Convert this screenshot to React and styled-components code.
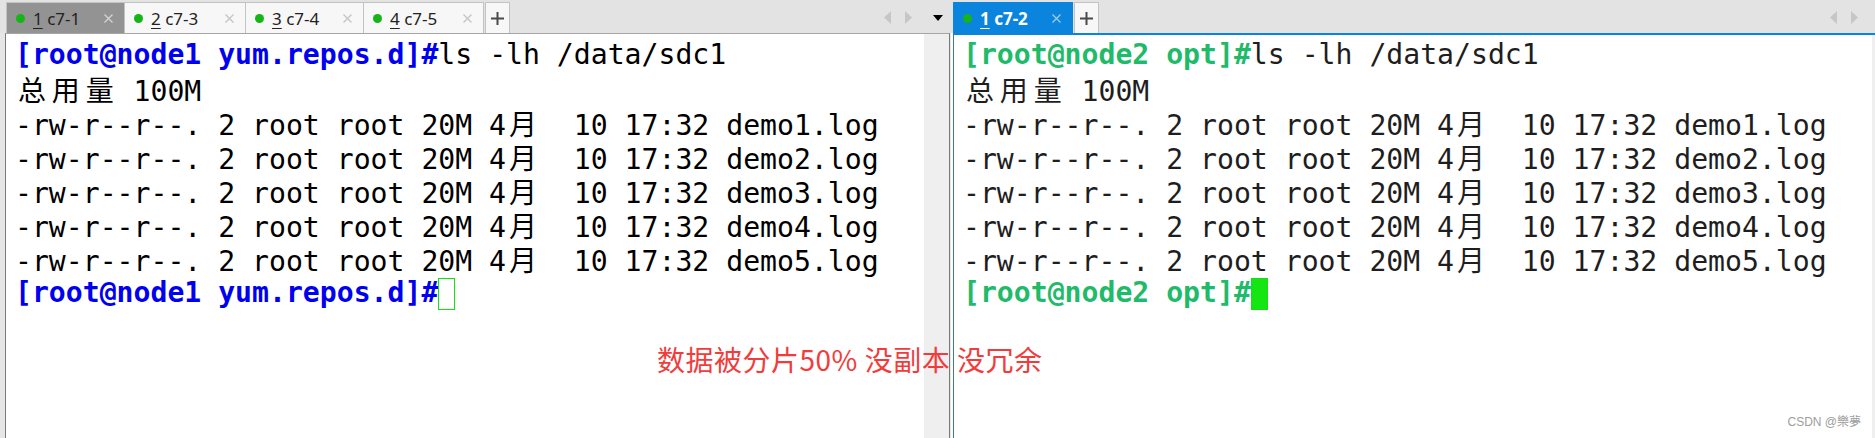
import React from "react";
import styled, { createGlobalStyle } from "styled-components";

const FONT = 28.14;
const CELL = FONT * 0.60205; // DejaVu Sans Mono advance

const GlobalStyle = createGlobalStyle`
	html, body {
		margin: 0;
		padding: 0;
		background: #fff;
	}
	body {
		width: 1875px;
		height: 438px;
		overflow: hidden;
	}
`;

const Screen = styled.div`
	position: relative;
	display: flex;
	width: 1875px;
	height: 438px;
	background: #fff;
	overflow: hidden;
`;

const Pane = styled.section`
	display: flex;
	flex-direction: column;
	flex: ${(p) => (p.$width ? `0 0 ${p.$width}px` : "1 1 auto")};
	min-width: 0;
	background: ${(p) => (p.$focused ? "#fff" : "#e6e6e6")};
`;

const TabBar = styled.div`
	display: flex;
	align-items: flex-end;
	height: 33px;
	padding-left: ${(p) => p.$inset}px;
	padding-right: ${(p) => p.$trail}px;
	box-sizing: border-box;
	background: #e3e3e3;
	font-family: "Noto Sans", "Open Sans", sans-serif;
	font-size: 17px;
`;

const Tab = styled.div`
	display: flex;
	align-items: center;
	width: ${(p) => p.$w}px;
	height: 31px;
	box-sizing: border-box;
	padding: 0 11px 0 9px;
	margin-right: -1px;
	border: 1px solid ${(p) => (p.$variant === "active" ? "#0b84dd" : "#c3c3c3")};
	border-bottom: none;
	background: ${(p) =>
		p.$variant === "active" ? "#0b84dd" : p.$variant === "dim" ? "#939393" : "#f7f7f7"};
	color: ${(p) => (p.$variant === "active" ? "#fff" : "#222")};
	font-weight: ${(p) => (p.$variant === "active" ? 700 : 400)};
`;

const Dot = styled.span`
	flex: none;
	width: 9px;
	height: 9px;
	border-radius: 50%;
	background: #17b417;
	margin-right: 8px;
`;

const Label = styled.span`
	white-space: pre;
	line-height: 1;
	u {
		text-underline-offset: 3px;
	}
`;

const Close = styled.svg`
	flex: none;
	margin-left: auto;
	width: 9px;
	height: 9px;
`;

const PlusButton = styled.div`
	display: flex;
	align-items: center;
	justify-content: center;
	width: 25px;
	height: 31px;
	margin-left: 2px;
	box-sizing: border-box;
	border: 1px solid #c3c3c3;
	border-bottom: none;
	background: #f7f7f7;
`;

const Controls = styled.div`
	display: flex;
	align-items: center;
	align-self: stretch;
	padding-top: 2px;
	margin-left: auto;
	gap: 14px;
`;

const Body = styled.div`
	flex: 1;
	display: flex;
	margin-left: ${(p) => p.$ml}px;
	margin-right: ${(p) => p.$mr}px;
	background: #fff;
	border-top: ${(p) => (p.$focused ? "2px solid #0b84dd" : "1px solid #a6a6a6")};
	border-left: 1px solid ${(p) => (p.$focused ? "#3a78b8" : "#7a7a7a")};
	border-right: ${(p) => (p.$focused ? "none" : "1px solid #7a7a7a")};
`;

const Term = styled.div`
	flex: 1;
	padding: ${(p) => (p.$focused ? 3 : 4)}px 0 0 9px;
	font-family: "DejaVu Sans Mono", "Liberation Mono", monospace;
	font-size: ${FONT}px;
	line-height: 34px;
	color: ${(p) => p.$color};
	white-space: pre;
`;

const Line = styled.div`
	height: 34px;
`;

const Prompt = styled.span`
	font-weight: 700;
	color: ${(p) => p.$color};
`;

const Wide = styled.span`
	display: inline-block;
	width: ${CELL * 2}px;
	text-align: center;
	font-family: "Noto Sans CJK SC", sans-serif;
	font-size: 28px;
	font-weight: 400;
`;

const Cursor = styled.span`
	display: inline-block;
	vertical-align: top;
	width: ${CELL}px;
	height: 32px;
	margin-top: 2px;
	box-sizing: border-box;
	border: 1px solid #14e014;
	background: ${(p) => (p.$filled ? "#14e614" : "transparent")};
`;

const Scrollbar = styled.div`
	flex: none;
	width: ${(p) => p.$w}px;
	background: #efefef;
`;

const Note = styled.div`
	position: absolute;
	left: 657px;
	top: 345px;
	font-family: "Noto Sans CJK SC", sans-serif;
	font-size: 28px;
	line-height: 28px;
	letter-spacing: 0.5px;
	color: #f23c3c;
	white-space: pre;
`;

const Watermark = styled.div`
	position: absolute;
	right: 14px;
	top: 414px;
	font-family: "Liberation Sans", "Noto Sans CJK TC", sans-serif;
	font-size: 12px;
	line-height: 16px;
	color: #9d9d9d;
`;

const CJK = /([\u3400-\u9fff])/;

function Cells({ text }) {
	return text
		.split(CJK)
		.map((part, i) => (CJK.test(part) ? <Wide key={i}>{part}</Wide> : part));
}

const files = [1, 2, 3, 4, 5].map(
	(n) => `-rw-r--r--. 2 root root 20M 4月  10 17:32 demo${n}.log`
);

function Terminal({ host, dir, promptColor, textColor, focused }) {
	const prompt = `[root@${host} ${dir}]#`;
	return (
		<Term $color={textColor} $focused={focused}>
			<Line>
				<Prompt $color={promptColor}>{prompt}</Prompt>ls -lh /data/sdc1
			</Line>
			<Line>
				<Cells text="总用量 100M" />
			</Line>
			{files.map((f) => (
				<Line key={f}>
					<Cells text={f} />
				</Line>
			))}
			<Line>
				<Prompt $color={promptColor}>{prompt}</Prompt>
				<Cursor $filled={focused} />
			</Line>
		</Term>
	);
}

function CloseIcon({ color }) {
	return (
		<Close viewBox="0 0 9 9">
			<path d="M0.5 0.5 L8.5 8.5 M8.5 0.5 L0.5 8.5" stroke={color} strokeWidth="1.3" />
		</Close>
	);
}

function Arrow({ dir }) {
	return (
		<svg width="7" height="13" viewBox="0 0 7 13">
			<polygon points={dir === "left" ? "7,0 0,6.5 7,13" : "0,0 7,6.5 0,13"} fill="#c6c6c6" />
		</svg>
	);
}

function Tabs({ tabs, inset, trail, dropdown }) {
	return (
		<TabBar $inset={inset} $trail={trail}>
			{tabs.map((t) => (
				<Tab key={t.name} $variant={t.variant} $w={t.w}>
					<Dot />
					<Label>
						<u>{t.n}</u> {t.name}
					</Label>
					<CloseIcon
						color={t.variant === "active" ? "#9ccbef" : t.variant === "dim" ? "#d4d4d4" : "#c4c4c4"}
					/>
				</Tab>
			))}
			<PlusButton>
				<svg width="13" height="13" viewBox="0 0 13 13">
					<path d="M6.5 0 V13 M0 6.5 H13" stroke="#4a4a4a" strokeWidth="2" />
				</svg>
			</PlusButton>
			<Controls>
				<Arrow dir="left" />
				<Arrow dir="right" />
				{dropdown && (
					<svg width="10" height="6" viewBox="0 0 10 6" style={{ marginLeft: 7 }}>
						<polygon points="0,0 10,0 5,6" fill="#000" />
					</svg>
				)}
			</Controls>
		</TabBar>
	);
}

const leftTabs = [
	{ n: 1, name: "c7-1", variant: "dim", w: 119 },
	{ n: 2, name: "c7-3", w: 122 },
	{ n: 3, name: "c7-4", w: 119 },
	{ n: 4, name: "c7-5", w: 121 },
];

const rightTabs = [{ n: 1, name: "c7-2", variant: "active", w: 120 }];

export default function App() {
	return (
		<>
			<GlobalStyle />
			<Screen>
				<Pane $width={951}>
					<Tabs tabs={leftTabs} inset={6} trail={8} dropdown />
					<Body $ml={5} $mr={1}>
						<Terminal host="node1" dir="yum.repos.d" promptColor="#0000f0" textColor="#000" />
						<Scrollbar $w={25} />
					</Body>
				</Pane>
				<Pane $focused>
					<Tabs tabs={rightTabs} inset={2} trail={17} />
					<Body $ml={2} $mr={0} $focused>
						<Terminal host="node2" dir="opt" promptColor="#1fba6a" textColor="#1e1e1e" focused />
						<Scrollbar $w={3} />
					</Body>
				</Pane>
				<Note>数据被分片50% 没副本 没冗余</Note>
				<Watermark>CSDN @樂夢</Watermark>
			</Screen>
		</>
	);
}
